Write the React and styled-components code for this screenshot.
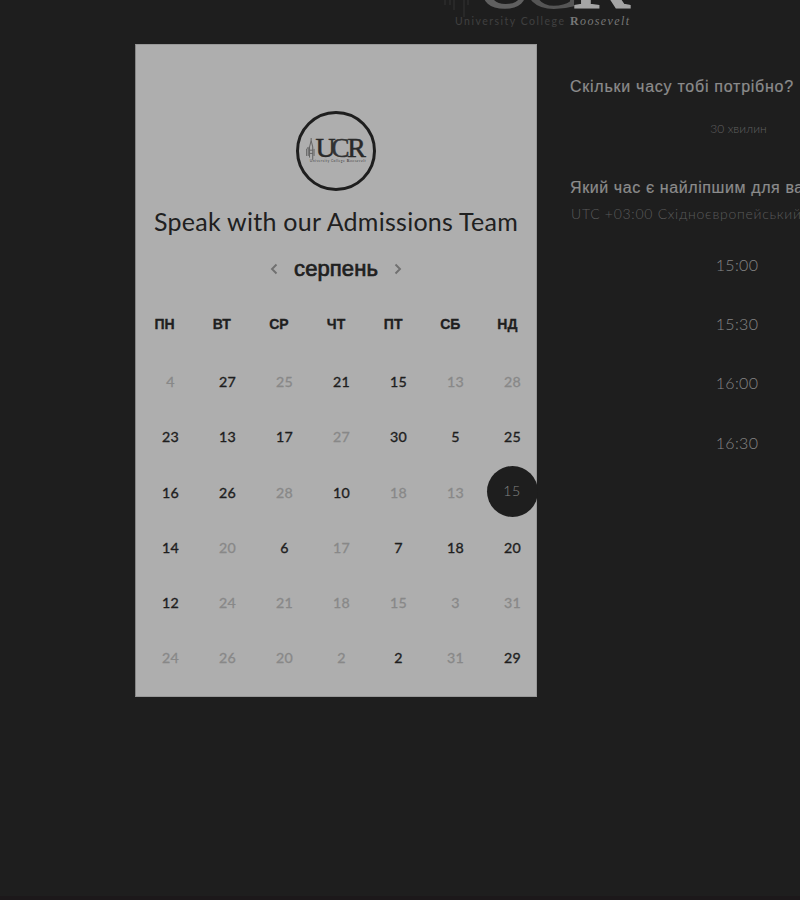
import React from "react";
import styled, { createGlobalStyle } from "styled-components";

const Global = createGlobalStyle`
  body { margin: 0; background: #1e1e1e; }
  * { box-sizing: border-box; }
`;

const Page = styled.div`
  width: 800px;
  height: 900px;
  overflow: hidden;
  display: flex;
  flex-direction: column;
  background: #1e1e1e;
  border-bottom: 4px solid #1c181a;
  font-family: Lato, "Liberation Sans", sans-serif;
`;

const Header = styled.header`
  height: 44px;
  flex: none;
  padding-left: 443px;
  display: flex;
  align-items: flex-end;
`;

const LogoSvg = styled.svg`
  display: block;
  flex: none;
  overflow: visible;
  width: ${(p) => p.$width}px;
  height: ${(p) => (p.$width * 80) / 187}px;
  margin-bottom: ${(p) => p.$bottom || 0}px;
`;

const Main = styled.main`
  display: flex;
  padding-left: 135px;
`;

const Card = styled.section`
  width: 402px;
  height: 653px;
  flex: none;
  background: #aeaeae;
  border: 1px solid #989898;
  border-left-color: #858585;
  display: flex;
  flex-direction: column;
  align-items: center;
`;

const Avatar = styled.div`
  width: 80px;
  height: 80px;
  margin-top: 66px;
  border: 3px solid #1e1e1e;
  border-radius: 50%;
  display: flex;
  align-items: center;
  justify-content: center;
`;

const Title = styled.h1`
  margin: 13px 0 0;
  height: 34px;
  line-height: 34px;
  font-size: 25px;
  font-weight: 400;
  letter-spacing: 0.27px;
  white-space: nowrap;
  color: #202020;
`;

const MonthBar = styled.div`
  height: 30px;
  margin-top: 16px;
  display: flex;
  align-items: center;
  gap: 16px;
`;

const Month = styled.h2`
  margin: 0;
  font: 400 22px/30px "Liberation Sans", sans-serif;
  letter-spacing: 0.1px;
  color: #202020;
  -webkit-text-stroke: 0.7px #202020;
`;

const Arrow = styled.svg`
  width: 8px;
  height: 12px;
  margin-top: -1px;
  fill: none;
  stroke: #707070;
  stroke-width: 1.9;
`;

const Weekdays = styled.div`
  width: 399px;
  display: grid;
  grid-template-columns: repeat(7, 57.15px);
  height: 20px;
  margin-top: 30px;
  align-self: flex-start;
`;

const Weekday = styled.span`
  font: 700 14px/21px "Liberation Sans", sans-serif;
  color: #202020;
  -webkit-text-stroke: 0.3px #202020;
  text-align: center;
`;

const Days = styled.div`
  width: 399px;
  margin: 20px 0 0 6px;
  display: grid;
  grid-template-columns: repeat(7, 57px);
  grid-auto-rows: 55.25px;
  align-self: flex-start;
`;

const Day = styled.div`
  display: flex;
  align-items: center;
  justify-content: center;
  font-size: 14.2px;
  font-weight: 400;
  letter-spacing: 0.2px;
  color: ${(p) => (p.$muted ? "#888" : "#1e1e1e")};
  -webkit-text-stroke: ${(p) => (p.$muted ? "0.3px #888" : "0.35px #1e1e1e")};
`;

const Selected = styled.span`
  flex: none;
  width: 51px;
  height: 51px;
  margin: -2px 1px 0 0;
  padding-bottom: 2px;
  border-radius: 50%;
  background: #1e1e1e;
  color: #858585;
  font-weight: 300;
  letter-spacing: 0.5px;
  -webkit-text-stroke: 0;
  display: flex;
  align-items: center;
  justify-content: center;
`;

const Side = styled.aside`
  margin-left: 33px;
  width: 334px;
  flex: none;
  display: flex;
  flex-direction: column;
`;

const Question = styled.h3`
  margin: ${(p) => p.$top}px 0 0;
  font: 400 16px/22px "Liberation Sans", sans-serif;
  letter-spacing: ${(p) => p.$spacing}px;
  color: #8c8c8c;
  -webkit-text-stroke: 0.2px #8c8c8c;
  white-space: nowrap;
`;

const Duration = styled.div`
  height: 20px;
  margin-top: 21px;
  padding-left: 3px;
  font: 300 12px/20px Lato, "Liberation Sans", sans-serif;
  letter-spacing: 0.1px;
  color: #606060;
  text-align: center;
`;

const Zone = styled.div`
  margin: 5px 0 0 1px;
  height: 20px;
  font: 300 14px/20px Lato, "Liberation Sans", sans-serif;
  letter-spacing: 0.72px;
  color: #5a5a5a;
  white-space: nowrap;
`;

const Slots = styled.div`
  margin-top: 10.5px;
  display: grid;
  grid-auto-rows: 59.3px;
`;

const Slot = styled.div`
  display: flex;
  align-items: center;
  justify-content: center;
  font-size: 16px;
  font-weight: 300;
  letter-spacing: 0.3px;
  color: #858585;
`;

function Logo({ width, bottom, dark }) {
  const c = dark
    ? { u: "#292929", c: "#333", r: "#292929", sub: "#444", name: "#444", tower: "#606060" }
    : { u: "#606060", c: "#555", r: "#a5a5a5", sub: "#404040", name: "#777", tower: "#282828" };
  return (
    <LogoSvg $width={width} $bottom={bottom} viewBox="0 0 187 80" role="img" aria-label="UCR">
      <path
        d="M2 56V34l5-5v27M11 61V28l5-20 5 20v40M16 8V0M25 56V34M11 38h10M11 48h10"
        fill="none"
        stroke={c.tower}
        strokeWidth={dark ? 3 : 2}
      />
      <g fontFamily="Liberation Serif, serif" fontSize="87">
        <text x="30" y="59" fill={c.u} stroke={c.u} strokeWidth={dark ? 1.5 : 0}>U</text>
        <text x="78" y="59" fill={c.c} stroke={c.c} strokeWidth={dark ? 1.5 : 0}>C</text>
        <text x="129" y="59" fill={c.r} stroke={c.r} strokeWidth="1.5">R</text>
      </g>
      <text x="12" y="76" fontFamily="Lato, sans-serif" fontSize="10.5" fill={c.sub} textLength="109">
        University College
      </text>
      <text x="127" y="76" fontFamily="Liberation Serif, serif" fontSize="12" fontWeight="700" fill={c.name} textLength="59">
        R<tspan fontStyle="italic" fontWeight="400">oosevelt</tspan>
      </text>
    </LogoSvg>
  );
}

const weekdays = ["ПН", "ВТ", "СР", "ЧТ", "ПТ", "СБ", "НД"];

// A minus sign marks a day that cannot be booked.
const days = [
  -4, 27, -25, 21, 15, -13, -28,
  23, 13, 17, -27, 30, 5, 25,
  16, 26, -28, 10, -18, -13, "15",
  14, -20, 6, -17, 7, 18, 20,
  12, -24, -21, -18, -15, -3, -31,
  -24, -26, -20, -2, 2, -31, 29,
];

const slots = ["15:00", "15:30", "16:00", "16:30"];

export default function App() {
  return (
    <Page>
      <Global />
      <Header>
        <Logo width={187} bottom={15} />
      </Header>
      <Main>
        <Card>
          <Avatar>
            <Logo width={60} dark />
          </Avatar>
          <Title>Speak with our Admissions Team</Title>
          <MonthBar>
            <Arrow viewBox="0 0 8 12"><path d="M6.5 1.5 2 6l4.500 4.500" /></Arrow>
            <Month>серпень</Month>
            <Arrow viewBox="0 0 8 12"><path d="M1.500 1.500 6 6l-4.500 4.500" /></Arrow>
          </MonthBar>
          <Weekdays>
            {weekdays.map((d) => <Weekday key={d}>{d}</Weekday>)}
          </Weekdays>
          <Days>
            {days.map((d, i) => (
              <Day key={i} $muted={d < 0}>
                {typeof d === "string" ? <Selected>{d}</Selected> : Math.abs(d)}
              </Day>
            ))}
          </Days>
        </Card>
        <Side>
          <Question $top={32} $spacing={0.74}>Скільки часу тобі потрібно?</Question>
          <Duration>30 хвилин</Duration>
          <Question $top={38} $spacing={0.6}>Який час є найліпшим для вас?</Question>
          <Zone>UTC +03:00 Східноєвропейський час</Zone>
          <Slots>
            {slots.map((s) => <Slot key={s}>{s}</Slot>)}
          </Slots>
        </Side>
      </Main>
    </Page>
  );
}
